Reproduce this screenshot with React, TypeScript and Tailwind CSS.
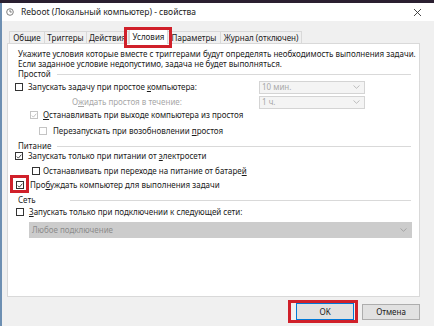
import React from "react";

const Check = ({ color }: { color: string }) => (
  <svg width="7" height="7" viewBox="0 0 7 7" className="block">
    <path d="M1 3.6 L2.8 5.4 L6.2 1.4" fill="none" stroke={color} strokeWidth="1" />
  </svg>
);

const Box = ({ checked = false, disabled = false }: { checked?: boolean; disabled?: boolean }) => (
  <span
    className={
      "w-[8px] h-[8px] shrink-0 border bg-white flex items-center justify-center " +
      (disabled ? "border-[#c4c4c4]" : "border-[#333333]")
    }
  >
    {checked && <Check color={disabled ? "#b8b8b8" : "#222222"} />}
  </span>
);

const Chevron = ({ color }: { color: string }) => (
  <svg width="7" height="4" viewBox="0 0 7 4" className="block">
    <path d="M0.5 0.5 L3.5 3.3 L6.5 0.5" fill="none" stroke={color} strokeWidth="0.8" />
  </svg>
);

const Dropdown = ({ text }: { text: string }) => (
  <div className="ml-auto mr-[54px] w-[106px] h-[13px] border border-[#d4d4d4] bg-[#f4f4f4] flex items-center pl-[2px] pr-[4px] text-[#a8a8a8]">
    <span className="flex-1">{text}</span>
    <Chevron color="#b0b0b0" />
  </div>
);

const Section = ({ label, lineStart }: { label: string; lineStart: string }) => (
  <div className="relative h-[10px] flex items-center pl-[10px]">
    <span>{label}</span>
    <div className={"absolute top-[5px] right-[8px] h-px bg-[#d9d9d9] " + lineStart} />
  </div>
);

export default function App() {
  return (
    <div className="w-[434px] h-[326px] overflow-hidden bg-[#f0f0f0] flex flex-col font-['Noto_Sans','DejaVu_Sans',sans-serif] text-[8px] leading-[10px] text-[#1a1a1a]">
      <div className="h-[3px] bg-[#2a1f30] shrink-0" />
      <div className="flex-1 flex">
        <div className="w-[2px] bg-[#6d8fb2] shrink-0" />
        <div className="flex-1 flex flex-col">
          {/* Title bar */}
          <div className="h-[18px] bg-white flex items-center shrink-0">
            <svg width="8" height="8" viewBox="0 0 8 8" className="ml-[4px] block">
              <circle cx="4" cy="4" r="3.3" fill="none" stroke="#707070" strokeWidth="0.9" />
              <path d="M4 1.8 V4 H5.8" fill="none" stroke="#707070" strokeWidth="0.9" />
            </svg>
            <span className="ml-[7px] text-[8.5px] text-[#222]">Reboot (Локальный компьютер) - свойства</span>
            <svg width="9" height="9" viewBox="0 0 9 9" className="ml-auto mr-[12px] block">
              <path d="M1 1 L8 8 M8 1 L1 8" stroke="#333" strokeWidth="0.9" />
            </svg>
          </div>

          {/* Tabs */}
          <div className="h-[22px] flex items-end pl-[7px] shrink-0 relative z-10">
            <div className="w-[36px] h-[12px] border border-b-0 border-[#d9d9d9] flex items-center justify-center">Общие</div>
            <div className="w-[42px] h-[12px] border border-b-0 border-l-0 border-[#d9d9d9] flex items-center justify-center">Триггеры</div>
            <div className="w-[42px] h-[12px] border border-b-0 border-l-0 border-[#d9d9d9] flex items-center justify-center">Действия</div>
            <div className="relative w-[39px] h-[15px] -mb-px bg-white border border-b-0 border-[#d9d9d9] flex items-center justify-center">
              Условия
              <div className="absolute left-[-6px] top-[-3px] w-[48px] h-[21px] border-[3px] border-[#d0202a]" />
            </div>
            <div className="w-[53px] h-[12px] border border-b-0 border-l-0 border-[#d9d9d9] flex items-center justify-center">Параметры</div>
            <div className="w-[81px] h-[12px] border border-b-0 border-l-0 border-[#d9d9d9] flex items-center justify-center">Журнал (отключен)</div>
          </div>

          {/* Panel */}
          <div className="ml-[5px] w-[413px] h-[254px] bg-white border border-[#d9d9d9] flex flex-col pt-[5px] shrink-0">
            <div className="h-[10px] flex items-center pl-[10px]">Укажите условия  которые вместе с триггерами будут определять необходимость выполнения задачи.</div>
            <div className="h-[10px] flex items-center pl-[10px]">Если заданное условие недопустимо, задача не будет выполняться.</div>
            <Section label="Простой" lineStart="left-[49px]" />

            <div className="h-[16px] flex items-center pl-[7px]">
              <Box />
              <span className="ml-[5px]">Запускать задачу при простое <u>к</u>омпьютера:</span>
              <Dropdown text="10 мин." />
            </div>
            <div className="h-[14px] flex items-center pl-[64px]">
              <span className="text-[#a8a8a8]">О<u>ж</u>идать простоя в течение:</span>
              <Dropdown text="1 ч." />
            </div>
            <div className="h-[12px] flex items-center pl-[22px]">
              <Box checked disabled />
              <span className="ml-[5px]"><u>О</u>станавливать при выходе компьютера из простоя</span>
            </div>
            <div className="h-[12px] mt-[4px] flex items-center pl-[31px]">
              <Box disabled />
              <span className="ml-[6px]">Перезапускать при возобновлении <u>п</u>ростоя</span>
            </div>

            <div className="mt-[4px]">
              <Section label="Питание" lineStart="left-[49px]" />
            </div>
            <div className="h-[10px] flex items-center pl-[7px]">
              <Box checked />
              <span className="ml-[5px]">Запускать только при питании от <u>э</u>лектросети</span>
            </div>
            <div className="h-[14px] mt-[3px] flex items-center pl-[24px]">
              <Box />
              <span className="ml-[3px]">Останавливать при переходе на питание от батаре<u>й</u></span>
            </div>
            <div className="h-[14px] flex items-center pl-[8px]">
              <span className="relative flex">
                <Box checked />
                <span className="absolute left-[-6px] top-[-6px] w-[19px] h-[18px] border-[3px] border-[#d0202a]" />
              </span>
              <span className="ml-[6px]">Про<u>б</u>уждать компьютер для выполнения задачи</span>
            </div>

            <div className="mt-[3px]">
              <Section label="Сеть" lineStart="left-[62px]" />
            </div>
            <div className="h-[12px] mt-[1px] flex items-center pl-[8px]">
              <Box />
              <span className="ml-[5px]"><u>З</u>апускать только при подключении к следующей сети:</span>
            </div>
            <div className="ml-[21px] mt-[4px] w-[383px] h-[16px] bg-[#cccccc] flex items-center pl-[3px] pr-[5px] text-[#8c8c8c]">
              <span className="flex-1">Любое подключение</span>
              <Chevron color="#9a9a9a" />
            </div>
          </div>

          {/* Buttons */}
          <div className="flex justify-end gap-[8px] pr-[14px] mt-[6px]">
            <div className="relative">
              <div className="w-[58px] h-[17px] bg-[#e1e1e1] border border-[#0078d7] flex items-center justify-center">OK</div>
              <div className="absolute left-[-8px] top-[-3px] w-[70px] h-[23px] border-[3px] border-[#d0202a]" />
            </div>
            <div className="w-[58px] h-[16px] mt-px bg-[#e1e1e1] border border-[#adadad] flex items-center justify-center">Отмена</div>
          </div>
        </div>
      </div>
    </div>
  );
}
